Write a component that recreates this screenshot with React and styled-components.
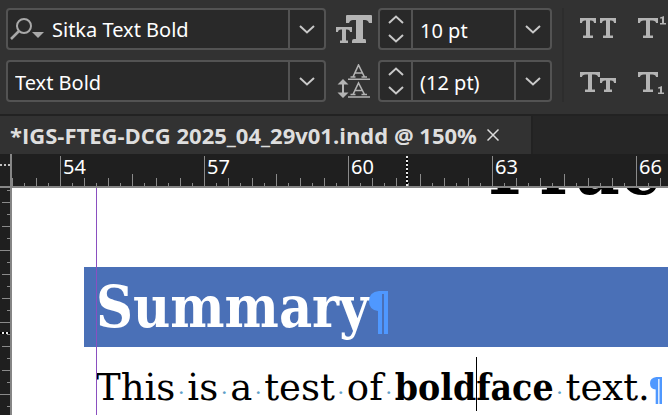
import React, { useState } from "react";
import styled, { createGlobalStyle } from "styled-components";

const WORDS = ["This", "is", "a", "test", "of"];
const RULER_MARKS = ["54", "57", "60", "63", "66"];

const Chevron = ({ up }) => (
    <svg width="16" height="9" viewBox="0 0 16 9" fill="none" stroke="#c8c8c8" strokeWidth="2">
        <path d={up ? "M1 8L8 1.5L15 8" : "M1 1L8 7.5L15 1"} />
    </svg>
);

const SearchIcon = () => (
    <svg width="34" height="24" viewBox="0 0 34 24" fill="none" stroke="#a9a9a9" strokeWidth="2">
        <circle cx="14" cy="9" r="7" />
        <path d="M9 14L1 22" strokeWidth="2.5" />
        <path d="M22 15H34L28 21Z" fill="#a9a9a9" stroke="none" />
    </svg>
);

const FontSizeIcon = () => (
    <svg width="36" height="30" viewBox="0 0 36 30" fill="#b4b4b4">
        <path d="M11 1H35Q36 1 36 2V9H33Q32 6 29 6H27V25H29Q30 25 30 27V29H16V27Q16 25 18 25H20V6H17Q14 6 13 9H10V2Q10 1 11 1Z" />
        <path d="M0 13H16V18H14Q14 15.500 11 15.500H10V26.500H12V29H4V26.500H6V15.500H5Q2 15.500 2 18H0Z" />
    </svg>
);

const LeadingIcon = () => (
    <svg width="34" height="34" viewBox="0 0 34 34" fill="none" stroke="#b4b4b4" strokeWidth="1.6">
        <path d="M11 15.3H33M11 33H33" />
        <path d="M16 13L21.500 1L27.500 13M18 9H25.500M13.500 13H18.500M24.500 13H30" />
        <path d="M16 30.500L21.500 19L27.500 30.500M18 26.500H25.500M13.500 30.500H18.500M24.500 30.500H30" />
        <path d="M6 18V30" strokeWidth="2" />
        <path d="M0.500 20.500L6 15L11.500 20.500ZM0.500 28.500L6 34L11.500 28.500Z" fill="#b4b4b4" stroke="none" />
    </svg>
);

const SMALL_T = "M0 0H16V5H14Q14 2.5 11 2.5H10V17.5H13V20H3V17.5H6V2.5H5Q2 2.5 2 5H0Z";
const WIDE_T = "M0 0H20V5H18Q18 2.5 14 2.5H12V17.5H15V20H5V17.5H8V2.5H6Q2 2.5 2 5H0Z";

const AllCapsIcon = () => (
    <svg width="36" height="22" viewBox="0 0 36 22" fill="#b4b4b4">
        <path d={SMALL_T} />
        <path d={SMALL_T} transform="translate(20 0)" />
    </svg>
);

const SmallCapsIcon = () => (
    <svg width="36" height="24" viewBox="0 -3 36 24" fill="#b4b4b4">
        <path d={WIDE_T} />
        <path d="M20 6H36V11H34Q34 8.5 31 8.5H30V17.5H32V20H24V17.5H26V8.5H25Q22 8.5 22 11H20Z" />
    </svg>
);

const SuperscriptIcon = () => (
    <svg width="30" height="26" viewBox="0 -2 30 26" fill="#b4b4b4">
        <path d={WIDE_T} />
        <path d="M22 -0.500L26 -2V5H28V6.500H22V5H24V0.500H22Z" />
    </svg>
);

const SubscriptIcon = () => (
    <svg width="30" height="26" viewBox="0 -4 30 26" fill="#b4b4b4">
        <path d={WIDE_T} />
        <path d="M20 15.500L24 14V20.500H26V22H20V20.500H22V16.500H20Z" />
    </svg>
);

const Pilcrow = ({ large }) => (
    <PilcrowSvg width={large ? 19 : 12} height={large ? 43 : 27} viewBox="0 0 19 43" preserveAspectRatio="none">
        <path d="M10 0H19V43H15V3H13V43H9V20Q0 19 0 10Q0 1 10 0Z" />
    </PilcrowSvg>
);

function App() {

    const [family, setFamily] = useState("Sitka Text Bold");
    const [weight, setWeight] = useState("Text Bold");
    const [size, setSize] = useState("10 pt");
    const [leading, setLeading] = useState("(12 pt)");

    return (
        <Window>
            <GlobalStyle />
            <Toolbar>
                <FontFields>
                    <Field>
                        <SearchButton aria-label="Search fonts"><SearchIcon /></SearchButton>
                        <FieldInput aria-label="Font family" value={family} onChange={(e) => setFamily(e.target.value)} />
                        <DropButton aria-label="Show font families"><Chevron /></DropButton>
                    </Field>
                    <Field>
                        <FieldInput $inset aria-label="Font style" value={weight} onChange={(e) => setWeight(e.target.value)} />
                        <DropButton aria-label="Show font styles"><Chevron /></DropButton>
                    </Field>
                </FontFields>
                <FieldIcons>
                    <FontSizeIcon />
                    <LeadingIcon />
                </FieldIcons>
                <SizeFields>
                    <Field>
                        <Stepper>
                            <StepButton aria-label="Increase font size"><Chevron up /></StepButton>
                            <StepButton aria-label="Decrease font size"><Chevron /></StepButton>
                        </Stepper>
                        <FieldInput $inset aria-label="Font size" value={size} onChange={(e) => setSize(e.target.value)} />
                        <DropButton aria-label="Show font sizes"><Chevron /></DropButton>
                    </Field>
                    <Field>
                        <Stepper>
                            <StepButton aria-label="Increase leading"><Chevron up /></StepButton>
                            <StepButton aria-label="Decrease leading"><Chevron /></StepButton>
                        </Stepper>
                        <FieldInput $inset aria-label="Leading" value={leading} onChange={(e) => setLeading(e.target.value)} />
                        <DropButton aria-label="Show leading values"><Chevron /></DropButton>
                    </Field>
                </SizeFields>
                <StyleButtons>
                    <StyleButton aria-label="All caps"><AllCapsIcon /></StyleButton>
                    <StyleButton aria-label="Superscript"><SuperscriptIcon /></StyleButton>
                    <StyleButton aria-label="Small caps"><SmallCapsIcon /></StyleButton>
                    <StyleButton aria-label="Subscript"><SubscriptIcon /></StyleButton>
                </StyleButtons>
            </Toolbar>
            <TabBar>
                <Tab>
                    <TabTitle>*IGS-FTEG-DCG 2025_04_29v01.indd @ 150%</TabTitle>
                    <CloseButton aria-label="Close document">
                        <svg width="12" height="12" viewBox="0 0 12 12" stroke="#dcdcdc" strokeWidth="1.5">
                            <path d="M0.500 0.500L11.500 11.500M11.500 0.500L0.500 11.500" />
                        </svg>
                    </CloseButton>
                </Tab>
            </TabBar>
            <Workspace>
                <RulerCorner />
                <TopRuler>
                    <RulerLead />
                    {RULER_MARKS.map((mark) => (
                        <RulerSegment key={mark}>{mark}</RulerSegment>
                    ))}
                    <RulerCursor />
                </TopRuler>
                <SideRuler>
                    <SideCursor />
                </SideRuler>
                <Page>
                    <TitleClip>
                        <Title>Prac</Title>
                    </TitleClip>
                    <Heading>Summary<Pilcrow large /></Heading>
                    <Body>
                        {WORDS.map((word) => (
                            <React.Fragment key={word}>{word}<Space>·</Space></React.Fragment>
                        ))}
                        <Bold>bold<Caret />face</Bold><Space>·</Space>text.<Pilcrow />
                    </Body>
                    <Guide />
                </Page>
            </Workspace>
        </Window>
    )
}

const GlobalStyle = createGlobalStyle`
body {
margin: 0;
background: #ffffff;
}
* {
box-sizing: border-box;
}
`;

const Window = styled.div`
min-height: 100vh;
display: flex;
flex-direction: column;
overflow: hidden;
font-family: "Noto Sans", sans-serif;
color: #ffffff;
background: #323232;
`;

const Toolbar = styled.div`
display: flex;
padding: 8px 0 12px 6px;
border-bottom: 2px solid #222222;
`;

const FontFields = styled.div`
display: flex;
flex-direction: column;
gap: 10px;
width: 320px;
flex-shrink: 0;
`;

const SizeFields = styled(FontFields)`
width: 174px;
`;

const Field = styled.div`
display: flex;
height: 42px;
border: 2px solid #535353;
border-radius: 4px;
background: #292929;
overflow: hidden;
`;

const FieldInput = styled.input`
flex: 1;
min-width: 0;
border: 0;
padding: ${(props) => (props.$inset ? "2px 0 0 7px" : "0 0 0 6px")};
background: transparent;
color: #ffffff;
font-family: "Noto Sans", sans-serif;
font-size: 20px;
outline: none;
`;

const IconButton = styled.button`
display: flex;
align-items: center;
justify-content: center;
padding: 0;
border: 0;
background: transparent;
`;

const SearchButton = styled(IconButton)`
width: 38px;
`;

const DropButton = styled(IconButton)`
width: 36px;
border-left: 2px solid #535353;
`;

const Stepper = styled.div`
display: flex;
flex-direction: column;
width: 33px;
border-right: 2px solid #535353;
`;

const StepButton = styled(IconButton)`
flex: 1;
`;

const FieldIcons = styled.div`
display: grid;
grid-template-rows: 42px 42px;
gap: 10px;
place-items: center;
width: 52px;
padding-left: 4px;
flex-shrink: 0;
`;

const StyleButtons = styled.div`
display: grid;
grid-template-columns: 36px 30px;
gap: 10px 22px;
margin-left: 10px;
padding-left: 16px;
border-left: 2px solid #2d2d2d;
`;

const StyleButton = styled(IconButton)`
height: 42px;
`;

const TabBar = styled.div`
display: flex;
background: #262626;
`;

const Tab = styled.div`
display: flex;
align-items: center;
gap: 10px;
height: 38px;
padding: 0 32px 0 10px;
border-right: 2px solid #222222;
background: #323232;
`;

const TabTitle = styled.span`
font-family: "Open Sans", sans-serif;
font-size: 22px;
font-weight: 700;
color: #dedede;
white-space: nowrap;
`;

const CloseButton = styled(IconButton)`
width: 12px;
height: 12px;
`;

const Workspace = styled.div`
flex: 1;
display: grid;
grid-template-columns: 12px minmax(0, 1fr);
grid-template-rows: 34px minmax(0, 1fr);
`;

const RulerCorner = styled.div`
background: linear-gradient(90deg, #c0c0c0 50%, transparent 50%) 0 10px / 4px 2px repeat-x #1f1f1f;
border-right: 2px solid #868686;
border-bottom: 2px solid #868686;
`;

const TopRuler = styled.div`
position: relative;
display: flex;
overflow: hidden;
background: #1f1f1f;
border-bottom: 2px solid #868686;
`;

const RulerSegment = styled.div`
flex: 0 0 144px;
padding-left: 3px;
font-size: 20px;
line-height: 26px;
background:
linear-gradient(#8a8a8a, #8a8a8a) 0 2px / 1px 30px no-repeat,
linear-gradient(#8a8a8a, #8a8a8a) 72px 100% / 1px 12px no-repeat,
linear-gradient(90deg, #8a8a8a 1px, transparent 1px) 0 100% / 24px 8px repeat-x,
linear-gradient(90deg, #8a8a8a 1px, transparent 1px) 12px 100% / 24px 3px repeat-x;

&:nth-last-child(2) {
flex: 1 0 0;
}
`;

const RulerLead = styled.div`
flex: 0 0 48px;
background:
linear-gradient(90deg, #8a8a8a 1px, transparent 1px) 0 100% / 24px 8px repeat-x,
linear-gradient(90deg, #8a8a8a 1px, transparent 1px) 12px 100% / 24px 3px repeat-x;
`;

const RulerCursor = styled.div`
position: absolute;
left: 394px;
top: 2px;
bottom: 0;
width: 2px;
background: repeating-linear-gradient(#e8e8e8 0 2px, #000000 2px 4px);
`;

const SideRuler = styled.div`
position: relative;
border-right: 2px solid #868686;
background:
linear-gradient(#8a8a8a 1px, transparent 1px) 0 62px / 10px 72px repeat-y,
linear-gradient(#8a8a8a 1px, transparent 1px) 100% 14px / 8px 24px repeat-y,
linear-gradient(#8a8a8a 1px, transparent 1px) 100% 2px / 3px 24px repeat-y,
#1f1f1f;
`;

const SideCursor = styled.div`
position: absolute;
left: 0;
right: 0;
top: 144px;
height: 2px;
background: repeating-linear-gradient(90deg, #000000 0 2px, #e8e8e8 2px 4px);
`;

const Page = styled.div`
position: relative;
overflow: hidden;
background: #ffffff;
color: #000000;
`;

const TitleClip = styled.div`
display: flex;
align-items: flex-end;
height: 8px;
margin-bottom: 71px;
padding-left: 476px;
overflow: hidden;
`;

const Title = styled.div`
font-family: "DejaVu Serif Condensed", "DejaVu Serif", serif;
font-size: 76px;
font-weight: 700;
line-height: 56px;
white-space: nowrap;
`;

const Heading = styled.h1`
margin: 0 0 0 72px;
padding-left: 12px;
height: 80px;
font-family: "DejaVu Serif Condensed", "DejaVu Serif", serif;
font-size: 57px;
font-weight: 700;
line-height: 80px;
white-space: nowrap;
color: #ffffff;
background: #4a70b7;
`;

const Body = styled.p`
margin: 0;
padding: 10px 0 0 84px;
font-family: "DejaVu Serif", serif;
font-size: 37px;
line-height: 60px;
white-space: nowrap;
`;

const Bold = styled.b`
font-family: "DejaVu Serif Condensed", "DejaVu Serif", serif;
`;

const Space = styled.span`
display: inline-block;
width: 12px;
text-align: center;
color: #5f9fc8;
font-family: "Liberation Serif", serif;
font-size: 24px;
`;

const PilcrowSvg = styled.svg`
fill: #4f98ff;
vertical-align: middle;
`;

const Caret = styled.span`
position: absolute;
width: 1px;
height: 54px;
background: #000000;
`;

const Guide = styled.div`
position: absolute;
top: 0;
bottom: 0;
left: 84px;
width: 1px;
background: #8a4fc0;
`;

export default App;
